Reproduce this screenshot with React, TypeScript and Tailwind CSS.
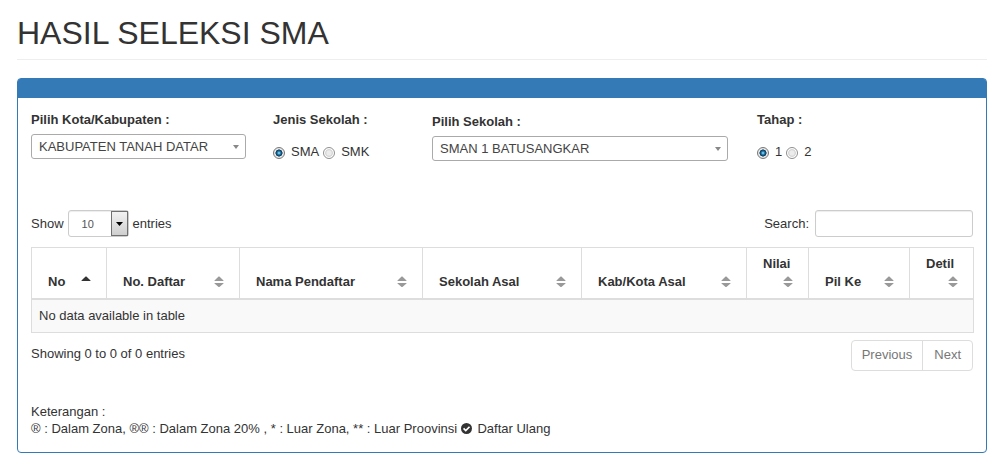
import { useState } from "react";

type SortState = "asc" | "none";

const columns: { title: string; width: string; sort: SortState }[] = [
  { title: "No", width: "w-[75px]", sort: "asc" },
  { title: "No. Daftar", width: "w-[133px]", sort: "none" },
  { title: "Nama Pendaftar", width: "w-[183px]", sort: "none" },
  { title: "Sekolah Asal", width: "w-[159px]", sort: "none" },
  { title: "Kab/Kota Asal", width: "w-[165px]", sort: "none" },
  { title: "Nilai", width: "w-[62px]", sort: "none" },
  { title: "Pil Ke", width: "w-[101px]", sort: "none" },
  { title: "Detil", width: "w-[64px]", sort: "none" },
];

function SortIcon({ state }: { state: SortState }) {
  return (
    <svg width="10" height="12" viewBox="0 0 10 12" className="my-[3px] ml-auto shrink-0" aria-hidden="true">
      {state === "asc" ? (
        <path d="M0.5 5V4.4L4.6 0.5h0.8L9.5 4.4V5z" fill="#333" />
      ) : (
        <path d="M0.5 5V4.4L4.6 0.5h0.8L9.5 4.4V5zM0.5 7v0.6L4.6 11h0.8L9.5 7.6V7z" fill="#999" />
      )}
    </svg>
  );
}

function Picker({ id, label, value }: { id: string; label: string; value: string }) {
  return (
    <div>
      <label htmlFor={id} className="mb-[5px] block font-bold">
        {label}
      </label>
      <div className="relative">
        <select
          id={id}
          className="block h-[25px] w-full appearance-none rounded-[3px] border border-[#aaa] bg-white pr-5 pl-[7px] text-[13px] text-[#444]"
        >
          <option>{value}</option>
        </select>
        <svg
          width="6"
          height="4"
          viewBox="0 0 6 4"
          className="pointer-events-none absolute top-[11px] right-[7px]"
          aria-hidden="true"
        >
          <path d="M0 0h6L3 4z" fill="#888" />
        </svg>
      </div>
    </div>
  );
}

function RadioGroup({ name, legend, options }: { name: string; legend: string; options: string[] }) {
  const [selected, setSelected] = useState(options[0]);
  return (
    <fieldset>
      <legend className="font-bold">{legend}</legend>
      <div className="mt-[14px] flex gap-1">
        {options.map((option) => (
          <label key={option} className="flex items-center gap-[6px]">
            <input
              type="radio"
              name={name}
              checked={selected === option}
              onChange={() => setSelected(option)}
              className="mt-[2px] size-3 appearance-none rounded-full border border-[#8e8f8f] bg-[radial-gradient(circle,#ececec_0_30%,#d2d2d2_48%,#fff_62%)] checked:border-[#777] checked:bg-[radial-gradient(circle_at_50%_50%,#6fc8ee_0_8%,#1a6ea0_26%,#0b3350_46%,#e8e8e8_54%)]"
            />
            {option}
          </label>
        ))}
      </div>
    </fieldset>
  );
}

export default function App() {
  return (
    <main className="bg-white pt-[15px] pr-5 pb-2.5 pl-[17px] font-['Liberation_Sans',Arial,sans-serif] text-[13px] leading-[18px] text-[#333]">
      <h1 className="mb-[18px] border-b border-[#eee] pb-2 text-[32px] leading-[36px]">HASIL SELEKSI SMA</h1>

      <section className="rounded-[4px] border border-[#337ab7]">
        <div className="h-[19px] rounded-t-[2px] bg-[#337ab7]" />
        <div className="px-[13px] pt-[13px] pb-[15px]">
          <div className="mb-[49px] grid grid-cols-[242fr_159fr_325fr_216fr]">
            <div className="pr-[27px]">
              <Picker id="kota" label="Pilih Kota/Kabupaten :" value="KABUPATEN TANAH DATAR" />
            </div>
            <RadioGroup name="jenis" legend="Jenis Sekolah :" options={["SMA", "SMK"]} />
            <div className="pt-0.5 pr-[29px]">
              <Picker id="sekolah" label="Pilih Sekolah :" value="SMAN 1 BATUSANGKAR" />
            </div>
            <RadioGroup name="tahap" legend="Tahap :" options={["1", "2"]} />
          </div>

          <div className="mb-2.5 flex items-center justify-between">
            <label className="flex items-center gap-1">
              Show
              <span className="relative block">
                <select className="block h-[27px] w-[61px] appearance-none rounded-[3px] border border-[#ccc] bg-white pl-[13px] text-[11px] text-[#555] shadow-[inset_0_1px_1px_rgba(0,0,0,0.075)]">
                  <option>10</option>
                </select>
                <span className="pointer-events-none absolute inset-y-[1px] right-[1px] flex w-[17px] items-center justify-center border border-[#707070] bg-linear-to-b from-[#f2f2f2] to-[#cfcfcf]">
                  <svg width="7" height="4" viewBox="0 0 7 4" aria-hidden="true">
                    <path d="M0 0h7L3.5 4z" fill="#000" />
                  </svg>
                </span>
              </span>
              entries
            </label>
            <label className="flex items-center gap-[6px]">
              Search:
              <input
                type="search"
                className="h-[27px] w-[158px] rounded-[3px] border border-[#ccc] px-2 shadow-[inset_0_1px_1px_rgba(0,0,0,0.075)]"
              />
            </label>
          </div>

          <table className="w-full table-fixed border-collapse border border-[#ddd]">
            <thead>
              <tr>
                {columns.map((column) => (
                  <th
                    key={column.title}
                    aria-sort={column.sort === "asc" ? "ascending" : undefined}
                    className={`${column.width} border border-b-2 border-[#ddd] px-[15px] py-[7px] text-left align-bottom`}
                  >
                    <button type="button" className="flex w-full flex-wrap items-end text-left font-bold">
                      <span className="pl-[1px]">{column.title}</span>
                      <SortIcon state={column.sort} />
                    </button>
                  </th>
                ))}
              </tr>
            </thead>
            <tbody>
              <tr className="bg-[#f9f9f9]">
                <td colSpan={8} className="border border-[#ddd] px-[7px] py-[7px]">
                  No data available in table
                </td>
              </tr>
            </tbody>
          </table>

          <div className="mt-[7px] flex items-start justify-between">
            <p className="pt-[5px]">Showing 0 to 0 of 0 entries</p>
            <nav className="flex rounded-[4px] border border-[#ddd] text-[#777]">
              <button type="button" className="border-r border-[#ddd] px-[10px] pt-[5px] pb-[6px]">
                Previous
              </button>
              <button type="button" className="px-[11px] pt-[5px] pb-[6px]">
                Next
              </button>
            </nav>
          </div>

          <div className="mt-8 leading-[17px]">
            <p>Keterangan :</p>
            <p>
              ® : Dalam Zona, ®® : Dalam Zona 20% , * : Luar Zona, ** : Luar Proovinsi{" "}
              <svg width="11" height="11" viewBox="0 0 12 12" className="mr-[2px] inline-block align-[-1px]" aria-hidden="true">
                <circle cx="6" cy="6" r="6" fill="#333" />
                <path d="M2.8 5.8 5.2 8.2 9.3 4.1" fill="none" stroke="#fff" strokeWidth="1.9" />
              </svg>{" "}
              Daftar Ulang
            </p>
          </div>
        </div>
      </section>
    </main>
  );
}
